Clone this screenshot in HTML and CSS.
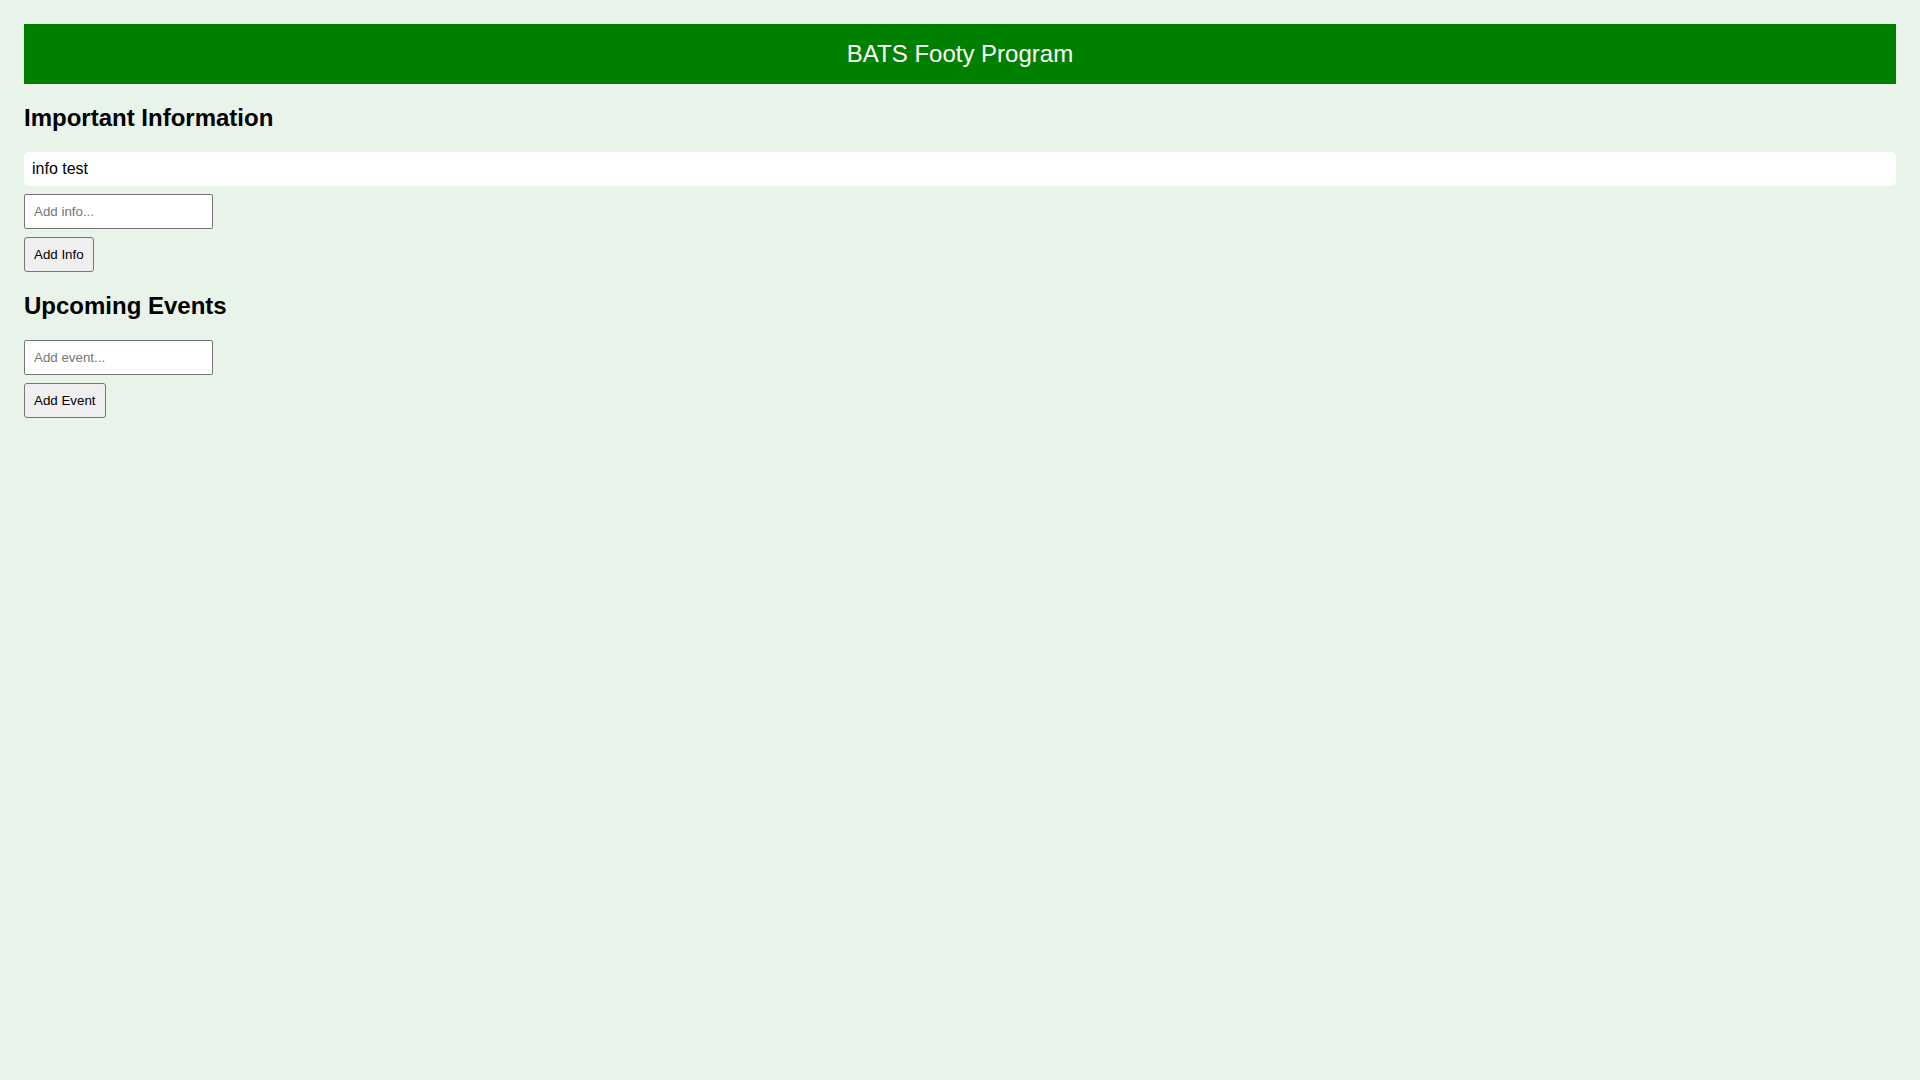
FILE: index.html
```html
<!DOCTYPE html>
<html lang="en">
<head>
<meta charset="utf-8">
<title>BATS Footy Program</title>
<link rel="stylesheet" href="styles.css">
</head>
<body>
<div class="page">
  <header class="banner">
    <h1 class="banner-title">BATS Footy Program</h1>
  </header>

  <section class="section">
    <h2 class="section-title">Important Information</h2>
    <ul class="item-list">
      <li class="item">info test</li>
    </ul>
    <input class="field" type="text" placeholder="Add info...">
    <button class="btn" type="button">Add Info</button>
  </section>

  <section class="section">
    <h2 class="section-title">Upcoming Events</h2>
    <ul class="item-list"></ul>
    <input class="field" type="text" placeholder="Add event...">
    <button class="btn" type="button">Add Event</button>
  </section>
</div>
</body>
</html>
```

FILE: styles.css
```css
html, body {
  margin: 0;
  padding: 0;
}

body {
  background: #e8f3ea;
  font-family: "Liberation Sans", Arial, sans-serif;
  color: #000;
}

.page {
  padding: 24px;
}

.banner {
  background: #008000;
  color: #fff;
  height: 60px;
  display: flex;
  align-items: center;
  justify-content: center;
}

.banner-title {
  margin: 0;
  font-size: 24px;
  font-weight: normal;
  line-height: 28px;
}

.section-title {
  font-size: 24px;
  font-weight: bold;
  line-height: 28px;
  margin: 20px 0 20px;
}

.item-list {
  list-style: none;
  margin: 0;
  padding: 0;
}

.item {
  background: #fff;
  border-radius: 5px;
  padding: 8px;
  font-size: 16px;
  line-height: 18px;
  margin-bottom: 8px;
}

.field {
  display: block;
  box-sizing: border-box;
  width: 189px;
  height: 35px;
  padding: 0 9px;
  margin: 0 0 8px;
  font-family: "Liberation Sans", Arial, sans-serif;
  font-size: 13.333px;
  border: 1px solid #767676;
  border-radius: 2px;
  background: #fff;
}

.field::placeholder {
  color: #757575;
}

.btn {
  display: block;
  box-sizing: border-box;
  height: 35px;
  padding: 0 9px;
  margin: 0;
  font-family: "Liberation Sans", Arial, sans-serif;
  font-size: 13.333px;
  color: #000;
  background: #efefef;
  border: 1px solid #767676;
  border-radius: 3px;
}
```
